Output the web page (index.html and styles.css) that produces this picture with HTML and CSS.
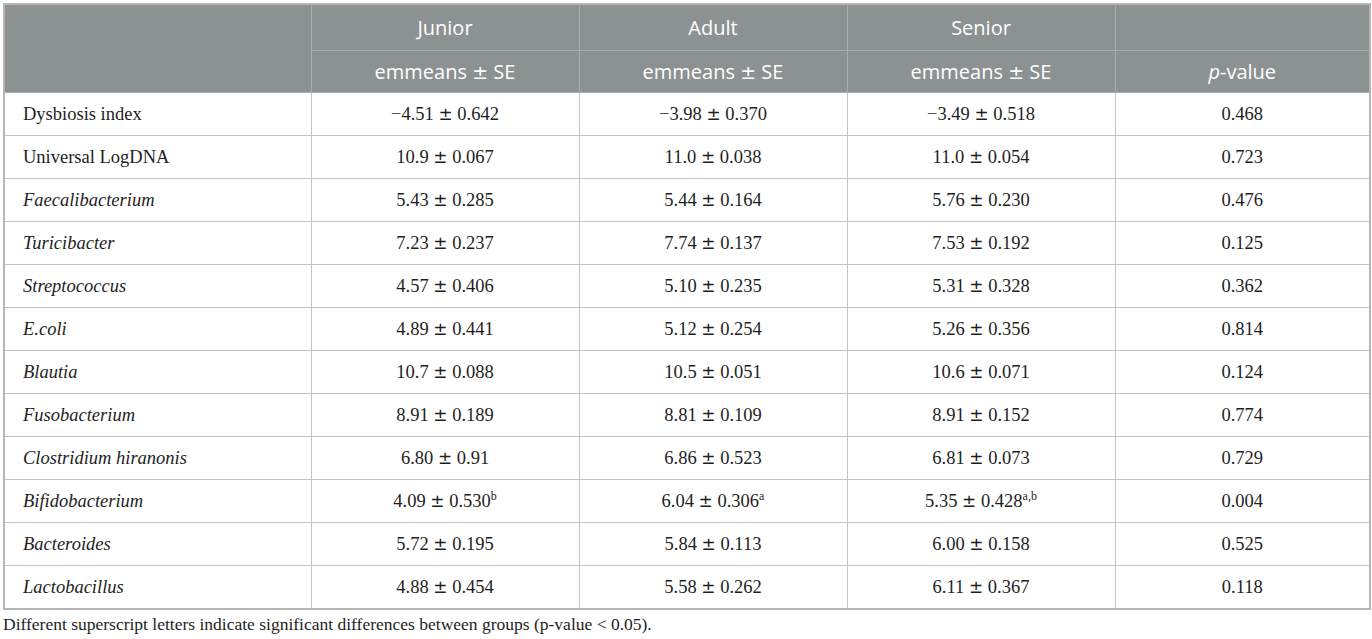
FILE: index.html
```html
<!DOCTYPE html>
<html>
<head>
<meta charset="utf-8">
<link rel="stylesheet" href="styles.css">
</head>
<body>
<div class="wrap">
<table class="data">
<colgroup>
<col class="c-name"><col class="c-val"><col class="c-val"><col class="c-val"><col class="c-p">
</colgroup>
<thead>
<tr class="h1">
<th rowspan="2" class="blank"></th>
<th>Junior</th><th>Adult</th><th>Senior</th><th class="np"></th>
</tr>
<tr class="h2">
<th>emmeans <span class="hpm">±</span> SE</th><th>emmeans <span class="hpm">±</span> SE</th><th>emmeans <span class="hpm">±</span> SE</th><th><i>p</i>-value</th>
</tr>
</thead>
<tbody>
<tr><td>Dysbiosis index</td><td>−4.51 <span class="pm">±</span> 0.642</td><td>−3.98 <span class="pm">±</span> 0.370</td><td>−3.49 <span class="pm">±</span> 0.518</td><td>0.468</td></tr>
<tr><td>Universal LogDNA</td><td>10.9 <span class="pm">±</span> 0.067</td><td>11.0 <span class="pm">±</span> 0.038</td><td>11.0 <span class="pm">±</span> 0.054</td><td>0.723</td></tr>
<tr><td><i>Faecalibacterium</i></td><td>5.43 <span class="pm">±</span> 0.285</td><td>5.44 <span class="pm">±</span> 0.164</td><td>5.76 <span class="pm">±</span> 0.230</td><td>0.476</td></tr>
<tr><td><i>Turicibacter</i></td><td>7.23 <span class="pm">±</span> 0.237</td><td>7.74 <span class="pm">±</span> 0.137</td><td>7.53 <span class="pm">±</span> 0.192</td><td>0.125</td></tr>
<tr><td><i>Streptococcus</i></td><td>4.57 <span class="pm">±</span> 0.406</td><td>5.10 <span class="pm">±</span> 0.235</td><td>5.31 <span class="pm">±</span> 0.328</td><td>0.362</td></tr>
<tr><td><i>E.coli</i></td><td>4.89 <span class="pm">±</span> 0.441</td><td>5.12 <span class="pm">±</span> 0.254</td><td>5.26 <span class="pm">±</span> 0.356</td><td>0.814</td></tr>
<tr><td><i>Blautia</i></td><td>10.7 <span class="pm">±</span> 0.088</td><td>10.5 <span class="pm">±</span> 0.051</td><td>10.6 <span class="pm">±</span> 0.071</td><td>0.124</td></tr>
<tr><td><i>Fusobacterium</i></td><td>8.91 <span class="pm">±</span> 0.189</td><td>8.81 <span class="pm">±</span> 0.109</td><td>8.91 <span class="pm">±</span> 0.152</td><td>0.774</td></tr>
<tr><td><i>Clostridium hiranonis</i></td><td>6.80 <span class="pm">±</span> 0.91</td><td>6.86 <span class="pm">±</span> 0.523</td><td>6.81 <span class="pm">±</span> 0.073</td><td>0.729</td></tr>
<tr><td><i>Bifidobacterium</i></td><td>4.09 <span class="pm">±</span> 0.530<sup>b</sup></td><td>6.04 <span class="pm">±</span> 0.306<sup>a</sup></td><td>5.35 <span class="pm">±</span> 0.428<sup>a,b</sup></td><td>0.004</td></tr>
<tr><td><i>Bacteroides</i></td><td>5.72 <span class="pm">±</span> 0.195</td><td>5.84 <span class="pm">±</span> 0.113</td><td>6.00 <span class="pm">±</span> 0.158</td><td>0.525</td></tr>
<tr><td><i>Lactobacillus</i></td><td>4.88 <span class="pm">±</span> 0.454</td><td>5.58 <span class="pm">±</span> 0.262</td><td>6.11 <span class="pm">±</span> 0.367</td><td>0.118</td></tr>
</tbody>
</table>
<p class="note">Different superscript letters indicate significant differences between groups (p-value &lt; 0.05).</p>
</div>
</body>
</html>
```

FILE: styles.css
```css
html, body {
  margin: 0;
  padding: 0;
  background: #ffffff;
}
.wrap {
  padding: 3px 0 0 3px;
}
.data {
  border-collapse: collapse;
  table-layout: fixed;
  width: 1367px;
  font-family: "Liberation Serif", "Times New Roman", serif;
  font-size: 18.5px;
  color: #1e1e1e;
  border: 2px solid #b3b6b3;
}
.c-name { width: 307px; }
.c-val { width: 268px; }
.c-p { width: 255px; }
.data th {
  background: #8c9192;
  color: #ffffff;
  font-family: "Open Sans", "Liberation Sans", sans-serif;
  font-weight: 400;
  font-size: 20px;
  text-align: center;
  border: 1px solid #a8acac;
  padding: 0;
}
.data th i { font-style: italic; }
.data th .hpm {
  font-family: "DejaVu Sans", sans-serif;
  font-size: 19px;
}
.h1 th { height: 45px; border-top: none; }
.h2 th { height: 41px; }
.h1 th.np { border-bottom: 1px solid #a8acac; }
.data td {
  height: 42px;
  padding: 0;
  text-align: center;
  border: 1px solid #c3c5c3;
  vertical-align: middle;
}
.data td:first-child {
  text-align: left;
  padding-left: 18px;
}
.data td .pm {
  font-family: "DejaVu Sans", sans-serif;
  font-size: 17px;
}
.data sup {
  font-size: 12px;
  line-height: 0;
  vertical-align: 7px;
}
.note {
  margin: 4px 0 0 0;
  font-family: "Liberation Serif", "Times New Roman", serif;
  font-size: 17.5px;
  color: #1e1e1e;
}
```
